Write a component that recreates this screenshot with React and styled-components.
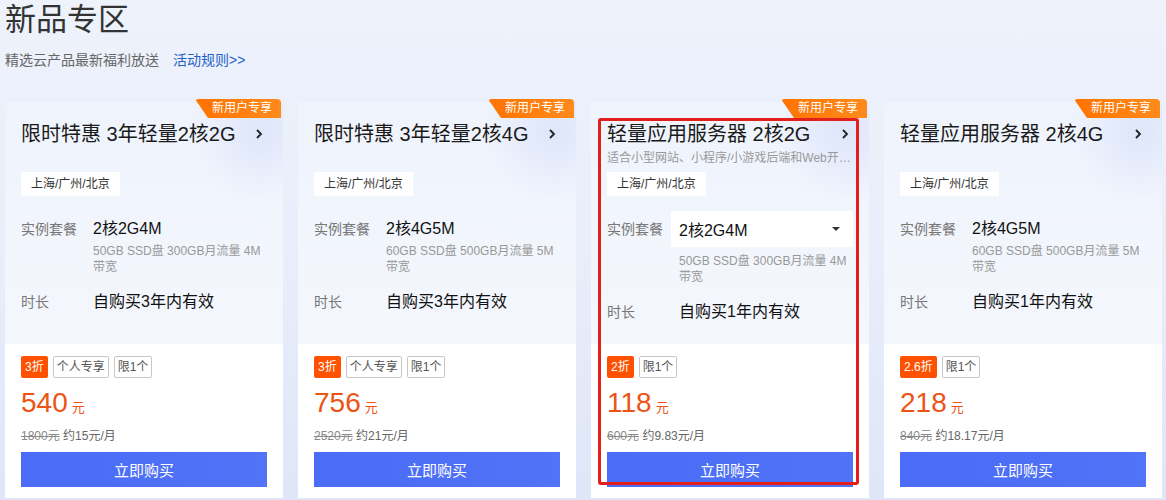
import React from "react";
import styled, { createGlobalStyle } from "styled-components";

const GlobalStyle = createGlobalStyle`
  * {
    box-sizing: border-box;
  }
  body {
    margin: 0;
    font-family: "Liberation Sans", "Noto Sans CJK SC", sans-serif;
    background: linear-gradient(180deg, #eef2fb 0%, #e8edfa 55%, #dfe6f8 100%);
    color: #333;
  }
`;

const products = [
  {
    title: "限时特惠 3年轻量2核2G",
    spec: "2核2G4M",
    desc: "50GB SSD盘 300GB月流量 4M带宽",
    duration: "自购买3年内有效",
    discount: "3折",
    tags: ["个人专享", "限1个"],
    price: "540",
    original: "1800元",
    monthly: "约15元/月",
  },
  {
    title: "限时特惠 3年轻量2核4G",
    spec: "2核4G5M",
    desc: "60GB SSD盘 500GB月流量 5M带宽",
    duration: "自购买3年内有效",
    discount: "3折",
    tags: ["个人专享", "限1个"],
    price: "756",
    original: "2520元",
    monthly: "约21元/月",
  },
  {
    title: "轻量应用服务器 2核2G",
    subtitle: "适合小型网站、小程序/小游戏后端和Web开…",
    spec: "2核2G4M",
    desc: "50GB SSD盘 300GB月流量 4M带宽",
    duration: "自购买1年内有效",
    discount: "2折",
    tags: ["限1个"],
    price: "118",
    original: "600元",
    monthly: "约9.83元/月",
    select: true,
    highlight: true,
  },
  {
    title: "轻量应用服务器 2核4G",
    spec: "2核4G5M",
    desc: "60GB SSD盘 500GB月流量 5M带宽",
    duration: "自购买1年内有效",
    discount: "2.6折",
    tags: ["限1个"],
    price: "218",
    original: "840元",
    monthly: "约18.17元/月",
  },
];

const App = () => {
  return (
    <>
      <GlobalStyle />
      <Page>
        <Title>新品专区</Title>
        <Sub>
          精选云产品最新福利放送
          <RuleLink href="#">活动规则&gt;&gt;</RuleLink>
        </Sub>
        <CardRow>
          {products.map((p) => (
            <Card key={p.title}>
              <Badge>新用户专享</Badge>
              {p.highlight && <Highlight />}
              <TopPart>
                <HeadBlock>
                  <TitleRow>
                    <CardTitle>{p.title}</CardTitle>
                    <svg width="8" height="12" viewBox="0 0 8 12">
                      <path
                        d="M2 2l4 4-4 4"
                        fill="none"
                        stroke="#222"
                        strokeWidth="1.8"
                      />
                    </svg>
                  </TitleRow>
                  {p.subtitle && <CardSub>{p.subtitle}</CardSub>}
                </HeadBlock>
                <Region>上海/广州/北京</Region>
                <SpecRow>
                  <Label>实例套餐</Label>
                  <div>
                    {p.select ? (
                      <Select>
                        <span>{p.spec}</span>
                        <svg width="10" height="6" viewBox="0 0 10 6">
                          <path d="M1 1h8L5 5z" fill="#333" />
                        </svg>
                      </Select>
                    ) : (
                      <Value>{p.spec}</Value>
                    )}
                    <Desc $select={p.select}>{p.desc}</Desc>
                  </div>
                </SpecRow>
                <DurationRow>
                  <Label>时长</Label>
                  <DurationValue>{p.duration}</DurationValue>
                </DurationRow>
              </TopPart>
              <BottomPart>
                <Tags>
                  <Discount>{p.discount}</Discount>
                  {p.tags.map((t) => (
                    <Tag key={t}>{t}</Tag>
                  ))}
                </Tags>
                <Price>
                  {p.price}
                  <small>元</small>
                </Price>
                <Original>
                  <s>{p.original}</s> {p.monthly}
                </Original>
                <BuyButton>立即购买</BuyButton>
              </BottomPart>
            </Card>
          ))}
        </CardRow>
      </Page>
    </>
  );
};

export default App;

const Page = styled.div`
  width: 1166px;
  height: 500px;
  overflow: hidden;
  padding: 0 5px;
`;

const Title = styled.h1`
  margin: 0;
  font-size: 31px;
  line-height: 40px;
  font-weight: 400;
  color: #333;
`;

const Sub = styled.div`
  margin-top: 10px;
  font-size: 14px;
  line-height: 20px;
  color: #666;
`;

const RuleLink = styled.a`
  margin-left: 14px;
  color: #1f63c8;
  text-decoration: none;
`;

const CardRow = styled.div`
  margin-top: 32px;
  display: grid;
  grid-template-columns: repeat(4, 278px);
  gap: 15px;
`;

const Card = styled.div`
  position: relative;
  background: #fff;
  height: 396px;
`;

const Badge = styled.div`
  position: absolute;
  top: -3px;
  right: 2px;
  width: 86px;
  height: 19px;
  padding: 0 8px 0 17px;
  font-size: 12px;
  line-height: 19px;
  color: #fff;
  white-space: nowrap;
  background: linear-gradient(90deg, #ff7300, #ff8a1c);
  border-radius: 4px 4px 0 0;
  clip-path: polygon(0 0, 100% 0, 100% 100%, 13px 100%);
  z-index: 2;
`;

const Highlight = styled.div`
  position: absolute;
  left: 7px;
  top: 16px;
  right: 10px;
  bottom: 13px;
  border: 3px solid #e21f1a;
  border-radius: 3px;
  pointer-events: none;
  z-index: 3;
`;

const TopPart = styled.div`
  height: 242px;
  padding: 18px 16px 0;
  background:
    radial-gradient(circle at 92% 12%, rgba(220, 228, 250, 0.9) 0, rgba(220, 228, 250, 0) 70px),
    linear-gradient(180deg, #eff3fc 0%, #f4f7fd 100%);
`;

const HeadBlock = styled.div`
  height: 52px;
`;

const TitleRow = styled.div`
  display: flex;
  align-items: center;
  justify-content: space-between;
  padding-right: 4px;
`;

const CardTitle = styled.div`
  font-size: 20px;
  line-height: 28px;
  color: #1a1a1a;
  white-space: nowrap;
`;

const CardSub = styled.div`
  margin-top: 1px;
  font-size: 12px;
  line-height: 18px;
  color: #999;
  white-space: nowrap;
`;

const Region = styled.div`
  display: inline-block;
  height: 24px;
  padding: 0 10px;
  font-size: 12px;
  line-height: 24px;
  color: #333;
  background: #fff;
`;

const SpecRow = styled.div`
  margin-top: 15px;
  display: grid;
  grid-template-columns: 64px 1fr;
`;

const Label = styled.div`
  font-size: 14px;
  line-height: 36px;
  color: #777;
`;

const Value = styled.div`
  padding-left: 8px;
  font-size: 16px;
  line-height: 36px;
  color: #111;
`;

const Select = styled.div`
  height: 36px;
  padding: 0 12px 0 8px;
  display: flex;
  align-items: center;
  justify-content: space-between;
  font-size: 16px;
  color: #111;
  background: #fff;
`;

const Desc = styled.div`
  margin-top: ${(p) => (p.$select ? "6px" : "-4px")};
  padding-left: 8px;
  font-size: 12px;
  line-height: 16px;
  color: #999;
`;

const DurationRow = styled.div`
  margin-top: 9px;
  display: grid;
  grid-template-columns: 64px 1fr;
  align-items: center;
`;

const DurationValue = styled.div`
  padding-left: 8px;
  font-size: 16px;
  line-height: 36px;
  color: #111;
`;

const BottomPart = styled.div`
  padding: 12px 16px 16px;
`;

const Tags = styled.div`
  display: flex;
  gap: 5px;
  height: 22px;
`;

const Discount = styled.span`
  padding: 0 4px;
  font-size: 12px;
  line-height: 22px;
  color: #fff;
  background: #ff5100;
  border-radius: 2px;
`;

const Tag = styled.span`
  padding: 0 3px;
  font-size: 12px;
  line-height: 20px;
  color: #555;
  border: 1px solid #c8c8c8;
  border-radius: 2px;
`;

const Price = styled.div`
  margin-top: 9px;
  font-size: 28px;
  line-height: 32px;
  color: #ec5416;
  small {
    margin-left: 4px;
    font-size: 13px;
  }
`;

const Original = styled.div`
  margin-top: 3px;
  font-size: 12px;
  line-height: 18px;
  color: #666;
  s {
    color: #888;
  }
`;

const BuyButton = styled.button`
  display: block;
  width: 100%;
  height: 35px;
  margin-top: 7px;
  border: none;
  font-family: inherit;
  font-size: 15px;
  color: #fff;
  background: linear-gradient(90deg, #4a6cf7, #5073f7);
  cursor: pointer;
`;
